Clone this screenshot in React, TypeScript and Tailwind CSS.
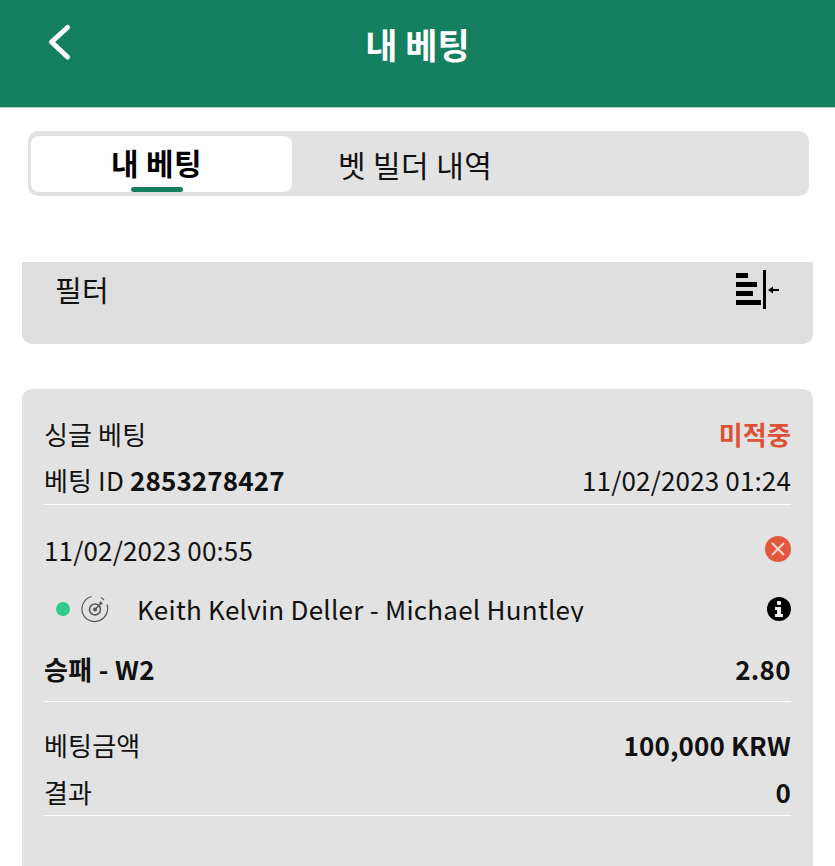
import React from 'react';

const BackIcon = () => (
  <svg className="absolute left-[47px] top-[23px]" width="26" height="38" viewBox="0 0 26 38" fill="none" stroke="#fff" strokeWidth="5" strokeLinecap="round" strokeLinejoin="round">
    <path d="M20.500 4.500L4.500 19L20.500 34" />
  </svg>
);

const FilterIcon = () => (
  <svg width="46" height="40" viewBox="0 0 46 40" fill="#000">
    <rect x="2" y="3" width="12" height="5" />
    <rect x="2" y="12" width="21" height="5" />
    <rect x="2" y="21" width="17" height="5" />
    <rect x="2" y="30" width="25" height="5" />
    <rect x="29" y="0" width="3" height="39" />
    <path d="M34 20l5-3.500v2.500h6v2h-6v2.500z" />
  </svg>
);

const TargetIcon = () => (
  <svg width="28" height="28" viewBox="0 0 28 28" fill="none" stroke="#555">
    <path d="M10.500 1.500A13 13 0 0 0 3 21 13 13 0 0 0 26 9.500 M20 2.500a13 13 0 0 1 3 2.500" strokeWidth="1.200" />
    <circle cx="14" cy="14.500" r="5.500" strokeWidth="1.500" />
    <circle cx="14" cy="14.500" r="2" fill="#555" stroke="none" />
    <path d="M14 14.500L19.500 9" strokeWidth="1.500" />
    <path d="M18 8l2-2 .5 1.500 1.500.5-2 2z" fill="#555" stroke="none" />
  </svg>
);

const App: React.FC = () => {
  return (
    <div className="w-[835px] h-[866px] overflow-hidden bg-white text-[#111] font-['Noto_Sans_CJK_KR','Noto_Sans',sans-serif]">
      <header className="h-[108px] bg-[#158060] border-b border-[#b5c9c1] flex items-start relative">
        <BackIcon />
        <h1 className="w-full text-center text-white font-bold text-[35px] leading-none pt-[26px]">내 베팅</h1>
      </header>

      <div className="ml-[28px] mr-[26px] mt-[23px] h-[65px] rounded-[10px] bg-[#e2e2e2] flex pl-[3px] pt-[5px]">
        <div className="relative w-[261px] h-[56px] bg-white rounded-[8px] flex items-center justify-center pb-[4px] pr-[10px]">
          <span className="text-[30px] font-bold leading-none text-black tracking-[0.3px]">내 베팅</span>
          <span className="absolute left-[100px] bottom-[0px] w-[52px] h-[5px] rounded-full bg-[#158060]"></span>
        </div>
        <div className="pl-[46px] pt-[9px] text-[30px] leading-[38px] tracking-[0.4px]">벳 빌더 내역</div>
      </div>

      <section className="mx-[22px] mt-[66px] h-[82px] bg-[#dedede] rounded-b-[10px] flex items-start justify-between pl-[33px] pr-[33px] pt-[8px]">
        <span className="text-[29px] leading-[38px] tracking-[0.3px]">필터</span>
        <FilterIcon />
      </section>

      <section className="mx-[22px] mt-[45px] h-[500px] bg-[#e2e2e2] rounded-t-[10px] px-[22px] text-[26px] tracking-[0.15px]">
        <div className="pt-[25px] h-[116px] border-b border-white">
          <div className="flex justify-between h-[47px] leading-[40px]">
            <span>싱글 베팅</span>
            <span className="font-bold text-[#dc5238]">미적중</span>
          </div>
          <div className="flex justify-between leading-[38px]">
            <span>베팅 ID <b className="font-bold">2853278427</b></span>
            <span>11/02/2023 01:24</span>
          </div>
        </div>

        <div className="h-[197px] pt-[19px] border-b border-white">
          <div className="flex justify-between items-center h-[58px] pb-[8px]">
            <span>11/02/2023 00:55</span>
            <span className="w-[26px] h-[26px] rounded-full bg-[#e2583e] flex items-center justify-center">
              <svg width="16" height="16" viewBox="0 0 16 16" stroke="#f6dcd6" strokeWidth="1.800"><path d="M2 2l12 12M14 2L2 14" /></svg>
            </span>
          </div>
          <div className="flex items-start h-[58px]">
            <span className="ml-[12px] mt-[20px] w-[14px] h-[14px] rounded-full bg-[#2ecc8f]"></span>
            <span className="ml-[11px] mt-[13px]"><TargetIcon /></span>
            <span className="ml-[28px] mt-[9px] flex-1 h-[31px] overflow-hidden leading-[36px] tracking-[0.25px]">Keith Kelvin Deller - Michael Huntley</span>
            <span className="mt-[15px] w-[24px] h-[24px] rounded-full bg-black flex flex-col items-center justify-center">
              <svg width="10" height="16" viewBox="0 0 10 16" fill="#eee"><rect x="3" y="0" width="4" height="4" rx="1" /><path d="M1 6h6v7h2v3H1v-3h2V9H1z" /></svg>
            </span>
          </div>
          <div className="flex justify-between items-center h-[56px] font-bold tracking-[0.35px]">
            <span>승패 - W2</span>
            <span>2.80</span>
          </div>
        </div>

        <div className="pt-[24px] h-[114px] border-b border-white">
          <div className="flex justify-between h-[46px] leading-[38px]">
            <span>베팅금액</span>
            <span className="font-bold">100,000 KRW</span>
          </div>
          <div className="flex justify-between leading-[40px]">
            <span>결과</span>
            <span className="font-bold">0</span>
          </div>
        </div>
      </section>
    </div>
  );
};

export default App;
